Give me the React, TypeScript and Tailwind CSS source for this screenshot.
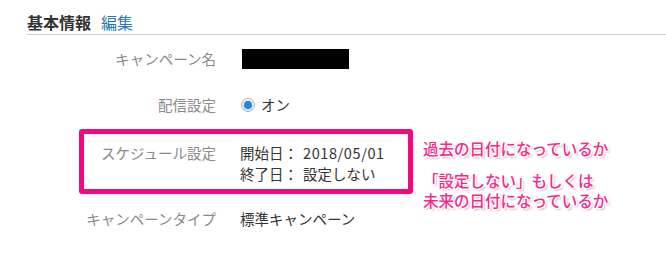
const font = { fontFamily: '"Noto Sans CJK JP", "Noto Sans", sans-serif' }

export default function App() {
  return (
    <div className="w-[666px] h-[256px] bg-white overflow-hidden pl-[27px]" style={font}>
      {/* 見出し */}
      <div className="flex items-center gap-[10px] pt-[12px] pb-[2px] border-b border-[#cfcfcf]">
        <span className="text-[16px] leading-[20px] font-bold text-[#333]">基本情報</span>
        <span className="text-[16px] leading-[20px] text-[#2a7ab0]">編集</span>
      </div>

      <div className="pl-[57px]">
        {/* キャンペーン名 */}
        <div className="flex items-center h-[48px]">
          <div className="w-[132px] text-right text-[14.5px] whitespace-nowrap text-[#8a8a8a]">キャンペーン名</div>
          <div className="ml-[26px] w-[107px] h-[20px] bg-black" />
        </div>

        {/* 配信設定 */}
        <div className="flex items-center h-[44px]">
          <div className="w-[132px] text-right text-[14.5px] whitespace-nowrap text-[#8a8a8a]">配信設定</div>
          <div className="ml-[25px] flex items-center gap-[6px]">
            <span className="w-[14px] h-[14px] rounded-full border border-[#b8b8b8] bg-gradient-to-b from-[#f4f4f4] to-[#dcdcdc] flex items-center justify-center">
              <span className="w-[8px] h-[8px] rounded-full bg-[#1e88e5]" />
            </span>
            <span className="text-[14.5px] text-[#333]">オン</span>
          </div>
        </div>

        {/* スケジュール設定 */}
        <div className="flex items-start h-[65px] mt-[2px]">
          <div className="-ml-[5px] w-[334px] h-[65px] border-[5px] border-[#f7077f] rounded-[3px] flex pt-[8px]">
            <div className="w-[132px] text-right text-[14.5px] leading-[21px] whitespace-nowrap text-[#8a8a8a]">スケジュール設定</div>
            <div className="ml-[24px] text-[14.5px] leading-[21px] text-[#333]">
              <div className="flex">
                <span className="w-[63px]">開始日：</span>
                <span className="tracking-[0.6px]">2018/05/01</span>
              </div>
              <div className="flex">
                <span className="w-[63px]">終了日：</span>
                <span>設定しない</span>
              </div>
            </div>
          </div>
          <div
            className="ml-[10px] mt-[9px] text-[15.5px] leading-[20px] whitespace-nowrap text-[#f52a8e] font-medium"
            style={{ textShadow: '1px 1px 0 #fff, -1px -1px 0 #fff, 1px -1px 0 #fff, -1px 1px 0 #fff, 2px 2px 2px #bbb' }}
          >
            <div>過去の日付になっているか</div>
            <div className="mt-[12px]">「設定しない」もしくは</div>
            <div>未来の日付になっているか</div>
          </div>
        </div>

        {/* キャンペーンタイプ */}
        <div className="flex items-center h-[50px]">
          <div className="w-[132px] text-right text-[14.5px] whitespace-nowrap text-[#8a8a8a]">キャンペーンタイプ</div>
          <div className="ml-[24px] text-[14.5px] text-[#333]">標準キャンペーン</div>
        </div>
      </div>
    </div>
  )
}
